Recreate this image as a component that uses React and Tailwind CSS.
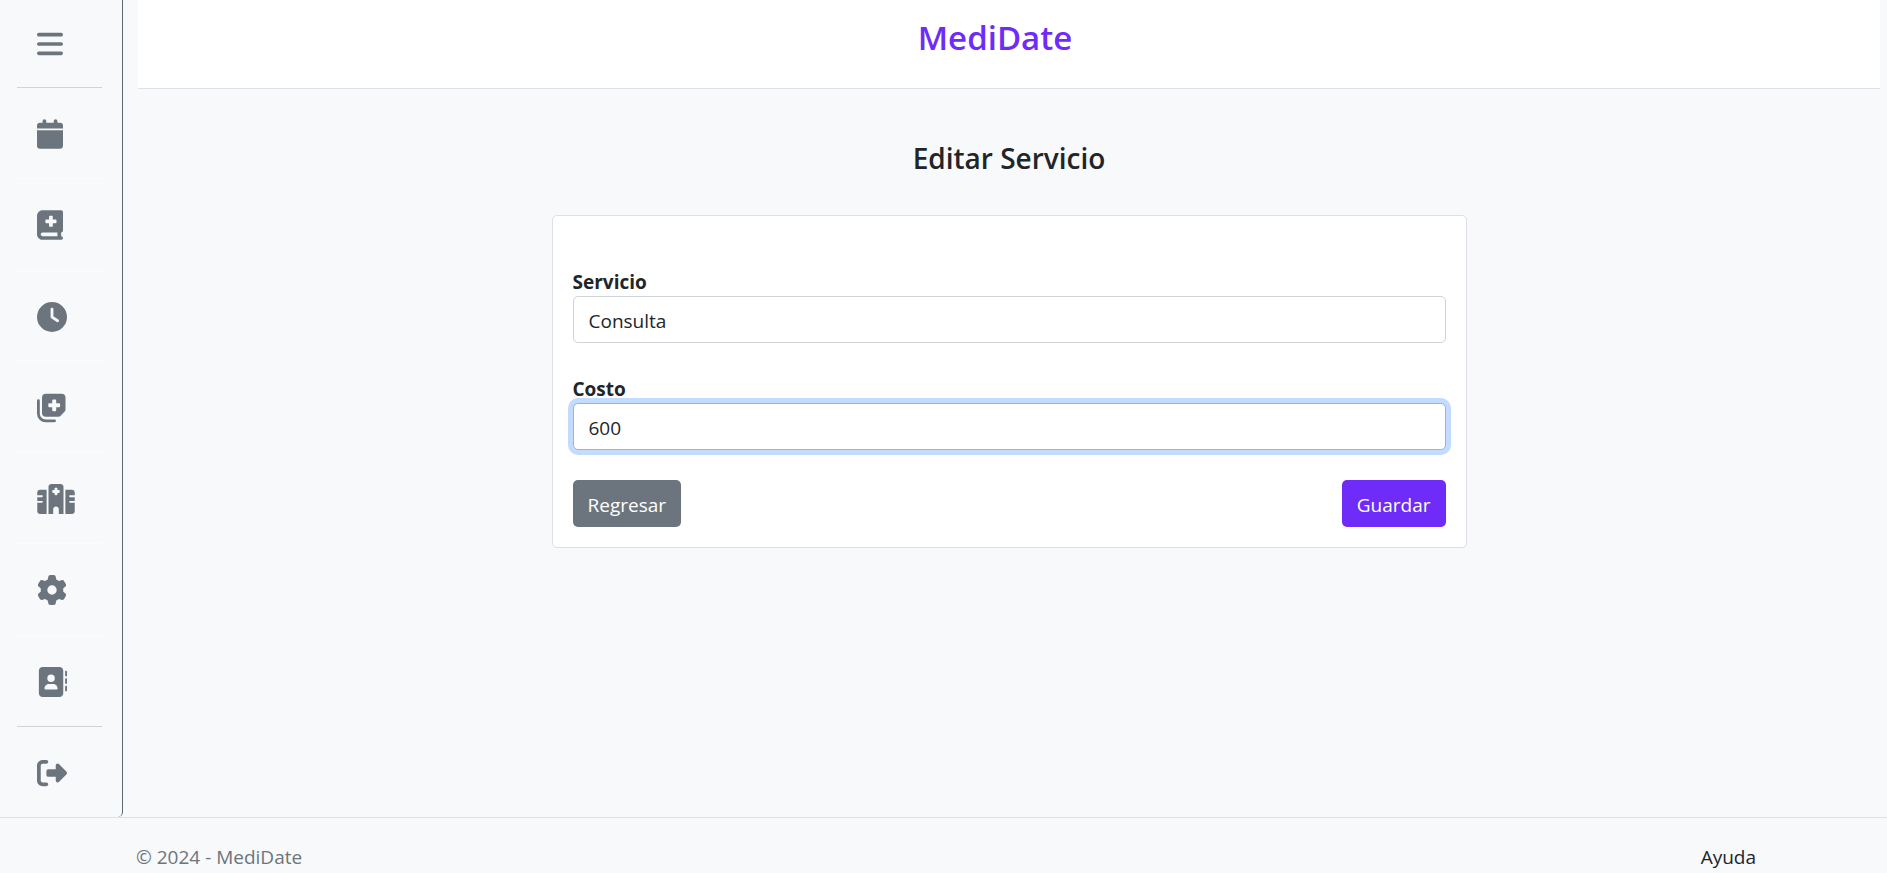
import { FaBars, FaCalendar, FaBookMedical, FaClock, FaHospital, FaGear, FaAddressBook, FaRightFromBracket } from "react-icons/fa6";

function StackedNotesIcon({ className }) {
  return (
    <svg viewBox="0 0 30 30" className={className} fill="currentColor" aria-hidden="true">
      <path
        fillRule="evenodd"
        d="M9 .7h15.500a4 4 0 0 1 4 4v11.800a2.600 2.600 0 0 1-.8 1.900l-4.300 4.500a2.600 2.600 0 0 1-1.900.8H9a4 4 0 0 1-4-4V4.700a4 4 0 0 1 4-4zM15.200 7.400v2.900h-2.900a1 1 0 0 0-1 1v2a1 1 0 0 0 1 1h2.900v2.900a1 1 0 0 0 1 1h2a1 1 0 0 0 1-1v-2.900h2.900a1 1 0 0 0 1-1v-2a1 1 0 0 0-1-1h-2.900V7.400a1 1 0 0 0-1-1h-2a1 1 0 0 0-1 1z"
      />
      <path d="M1.400 7.700V20.500a7.300 7.300 0 0 0 7.300 7.300H17.600" fill="none" stroke="currentColor" strokeWidth="2.800" strokeLinecap="round" />
    </svg>
  );
}

const items = [
  { label: "Calendario", Icon: FaCalendar, size: "w-[26px]", line: "border-[#d0d3d7]" },
  { label: "Expedientes", Icon: FaBookMedical, size: "w-[26px]", line: "border-[#fbfcfd]" },
  { label: "Horarios", Icon: FaClock, size: "w-[30px]", line: "border-[#fbfcfd]" },
  { label: "Servicios", Icon: StackedNotesIcon, size: "w-[30px]", line: "border-[#fbfcfd]" },
  { label: "Consultorios", Icon: FaHospital, size: "w-[38px]", line: "border-[#fbfcfd]" },
  { label: "Ajustes", Icon: FaGear, size: "w-[30px]", line: "border-[#fbfcfd]" },
  { label: "Contactos", Icon: FaAddressBook, size: "w-[30px]", line: "border-[#fbfcfd]" },
  { label: "Salir", Icon: FaRightFromBracket, size: "w-[30px]", line: "border-[#d0d3d7]" },
];

function Sidebar() {
  return (
    <nav className="flex w-[123px] shrink-0 flex-col rounded-br-[5px] border-r border-[#5f6972] pr-5 pl-[17px] text-[#6c757d]">
      <button type="button" aria-label="Menú" className="flex h-[87px] items-center pl-5">
        <FaBars className="h-[30px] w-[26px]" />
      </button>
      {items.map(({ label, Icon, size, line }) => (
        <a key={label} href="#" aria-label={label} className={`flex flex-1 items-center border-t pt-[2px] pl-5 ${line}`}>
          <Icon className={`h-[30px] ${size}`} />
        </a>
      ))}
    </nav>
  );
}

const inputBase = "h-[47px] w-full rounded-[5px] border bg-white px-[15px] pt-[2px] outline-none";

export default function App() {
  return (
    <div className="flex min-h-screen flex-col bg-[#f8f9fb] font-['Open_Sans','Noto_Sans',sans-serif] text-[19px] leading-[30px] text-[#212529]">
      <div className="flex flex-1">
        <Sidebar />
        <div className="flex flex-1 flex-col pr-[7px] pl-[15px]">
          <header className="h-[89px] border-b border-[#dee2e6] bg-white pt-[17px] pr-7 text-center">
            <a href="#" className="text-[33px] leading-[42px] font-semibold text-[#6f2cf9]">MediDate</a>
          </header>
          <main className="flex flex-col items-center">
            <h1 className="mt-[49px] text-[28px] leading-[40px] font-semibold">Editar Servicio</h1>
            <form className="mt-[37px] w-full max-w-[915px] rounded-[5px] border border-[#dee0e3] bg-white px-5 pt-[50px] pb-5">
              <label htmlFor="servicio" className="block pt-[2px] leading-[28px] font-bold">Servicio</label>
              <input id="servicio" type="text" defaultValue="Consulta" className={`${inputBase} border-[#ced4da]`} />
              <label htmlFor="costo" className="mt-[30px] block pt-[2px] leading-[28px] font-bold">Costo</label>
              <input id="costo" type="text" defaultValue="600" className={`${inputBase} border-[#86b7fe] shadow-[0_0_0_5px_#c2dbfe]`} />
              <div className="mt-[30px] flex justify-between text-white">
                <button type="button" className="h-[47px] rounded-[5px] bg-[#6c757d] px-[15px] pt-[2px]">Regresar</button>
                <button type="submit" className="h-[47px] rounded-[5px] bg-[#6f2cf9] px-[15px] pt-[2px]">Guardar</button>
              </div>
            </form>
          </main>
        </div>
      </div>
      <footer className="flex h-14 items-end justify-between border-t border-[#dee2e6] pr-[131px] pb-[1px] pl-[136px]">
        <span className="text-[#6c757d]">© 2024 - MediDate</span>
        <a href="#">Ayuda</a>
      </footer>
    </div>
  );
}
